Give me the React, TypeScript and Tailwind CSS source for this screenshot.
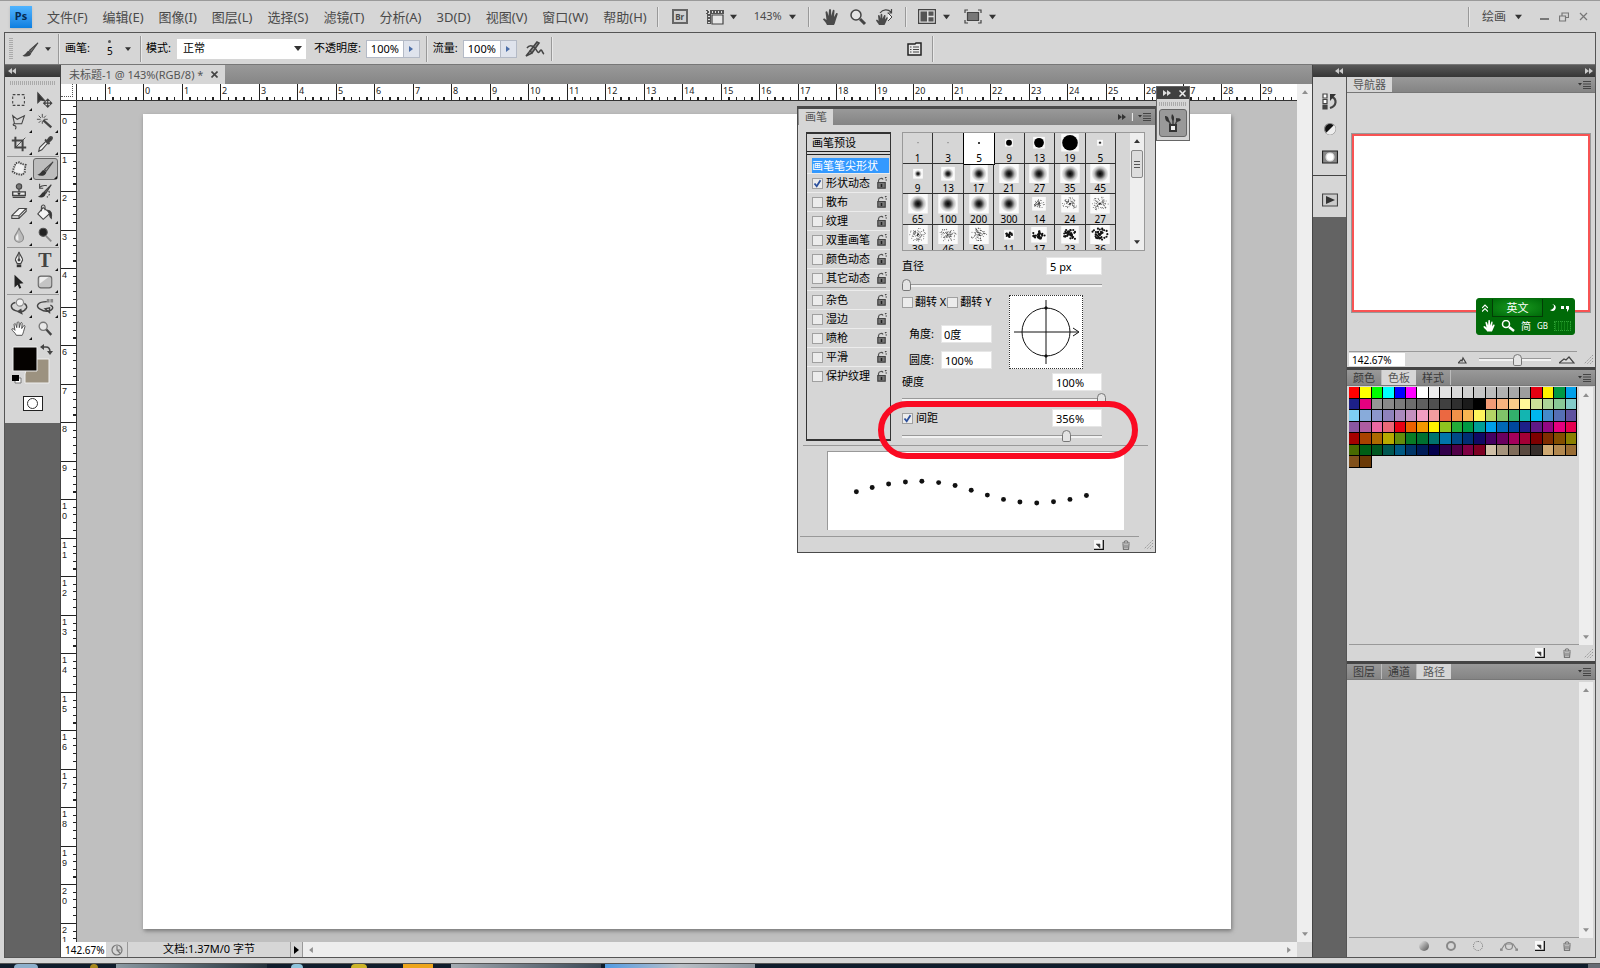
import type { ReactNode } from "react";

const menus = [
  "文件(F)",
  "编辑(E)",
  "图像(I)",
  "图层(L)",
  "选择(S)",
  "滤镜(T)",
  "分析(A)",
  "3D(D)",
  "视图(V)",
  "窗口(W)",
  "帮助(H)",
];

// pixels per ruler unit at the current zoom
const UNIT = 38.5;

interface IconProps {
  children: ReactNode;
  className?: string;
  box?: string;
}

function Icon({ children, className = "size-5", box = "0 0 20 20" }: IconProps) {
  return (
    <svg
      viewBox={box}
      className={className}
      fill="none"
      stroke="#444"
      strokeWidth="1.2"
      aria-hidden="true"
    >
      {children}
    </svg>
  );
}

function Caret({ className = "h-[5px] w-[8px]" }: { className?: string }) {
  return (
    <svg viewBox="0 0 8 5" className={className} aria-hidden="true">
      <path d="M0 0h8L4 5z" fill="#333" />
    </svg>
  );
}

function Sep({ className = "h-6" }: { className?: string }) {
  return (
    <div className={`w-[2px] border-l border-[#999] bg-[#e8e8e8] ${className}`} />
  );
}

function Grip({ className = "w-7" }: { className?: string }) {
  return (
    <div
      className={`h-1 bg-[repeating-linear-gradient(90deg,#aaa_0_1px,transparent_1px_2px)] ${className}`}
    />
  );
}

function DoubleArrow({ left = false }: { left?: boolean }) {
  return (
    <svg
      viewBox="0 0 8 6"
      className={`h-[6px] w-[8px] ${left ? "rotate-180" : ""}`}
      fill="currentColor"
      aria-hidden="true"
    >
      <path d="M0 0l4 3-4 3zM4 0l4 3-4 3z" />
    </svg>
  );
}

function Check({ id, on = false }: { id: string; on?: boolean }) {
  return (
    <span className="grid size-[11px] shrink-0">
      <input
        id={id}
        type="checkbox"
        defaultChecked={on}
        className="peer size-[11px] appearance-none border border-[#a0a0a0] bg-[#ececec] [grid-area:1/1]"
      />
      <svg
        viewBox="0 0 11 11"
        className="pointer-events-none hidden size-[11px] peer-checked:block [grid-area:1/1]"
        fill="none"
        stroke="#2b4f9c"
        strokeWidth="1.8"
      >
        <path d="M2.5 5.5l2.2 2.8L8.5 2.2" />
      </svg>
    </span>
  );
}

function Field({ id, value, className }: { id: string; value: string; className: string }) {
  return (
    <input
      id={id}
      aria-label={id}
      type="text"
      defaultValue={value}
      className={`h-[18px] border border-[#e6e6e6] bg-white text-[11px] leading-4 text-black ${className}`}
    />
  );
}

function Slider({ label, value, className }: { label: string; value: number; className: string }) {
  return (
    <input
      type="range"
      aria-label={label}
      defaultValue={value}
      className={`block h-3 appearance-none bg-[linear-gradient(#999_33%,#f2f2f2_33%)] bg-[length:200px_3px] bg-left bg-no-repeat [&::-webkit-slider-thumb]:h-3 [&::-webkit-slider-thumb]:w-[9px] [&::-webkit-slider-thumb]:appearance-none [&::-webkit-slider-thumb]:rounded-t-[5px] [&::-webkit-slider-thumb]:rounded-b-[2px] [&::-webkit-slider-thumb]:border [&::-webkit-slider-thumb]:border-[#777] [&::-webkit-slider-thumb]:bg-[#e4e4e4] ${className}`}
    />
  );
}

function MenuBar() {
  return (
    <header className="flex h-8 shrink-0 items-center border-t border-[#9a9a9a] pl-[10px] pr-3 text-[13px] text-[#4a4a4a]">
      <div className="flex size-[22px] items-center justify-center bg-linear-to-b from-[#4fb4ff] to-[#0a7fe0] text-[11px] font-bold text-[#062a50] shadow">
        Ps
      </div>
      <nav className="ml-[15px] flex gap-[15px]">
        {menus.map((m) => (
          <button key={m} className="whitespace-nowrap leading-5">
            {m}
          </button>
        ))}
      </nav>
      <Sep className="ml-[10px] h-5" />
      <button className="ml-[13px] flex h-[15px] w-4 items-center justify-center border-2 border-[#666] bg-[#d0d0d0] text-[8px] font-bold leading-none">
        Br
      </button>
      <button className="ml-[18px] flex items-center gap-[6px]" aria-label="查看额外内容">
        <Icon className="h-4 w-[18px]" box="0 0 18 16">
          <path d="M0 3h18M3 1v14" stroke="#555" strokeWidth="4" />
          <path d="M0 3h18M3 1v14" stroke="#ddd" strokeWidth="2" strokeDasharray="1 2" />
          <path d="M6 6h11v9H6z" fill="#e6e6e6" />
        </Icon>
        <Caret className="h-[6px] w-[7px]" />
      </button>
      <button className="ml-[17px] flex items-center gap-[7px] text-[11px]">
        143%
        <Caret className="h-[6px] w-[7px]" />
      </button>
      <Sep className="ml-[12px] h-5" />
      <div className="ml-[11px] flex items-center gap-[7px]">
        <button aria-label="抓手工具">
          <Icon>
            <path
              d="M6 18c-1-3-4-5-4-6 1-1 2-.5 3.5 1L4.5 5c.5-1.2 1.800-1 2 .2L7.500 9 8 3c.3-1.200 1.800-1.200 2 0l.3 6 1.400-5.500c.4-1 1.800-.8 1.800.4L13 10l2-3.500c.7-.9 2-.3 1.600.9L14.500 14c-.5 2-1 3-1.500 4z"
              fill="#4a4a4a"
              stroke="none"
            />
          </Icon>
        </button>
        <button aria-label="缩放工具">
          <Icon>
            <circle cx="8" cy="8" r="5" strokeWidth="1.5" fill="#e3e3e3" />
            <path d="M12 12l5 5" strokeWidth="3" />
          </Icon>
        </button>
        <button aria-label="旋转视图工具">
          <Icon>
            <path
              d="M4 18c-1-2-3-4-3-5 1-.6 1.600 0 2.600 1L3 8.500c.6-1 1.500-.6 1.700.3l.7 2.700.2-4c.5-1 1.600-.8 1.700.2l.1 4L9 8.500c.5-.9 1.600-.4 1.500.5L10 12.500l1.500-2c.7-.6 1.500 0 1.200.8L10.500 16l-1 2z"
              fill="#4a4a4a"
              stroke="none"
            />
            <path d="M13 6l4 4-4 4" fill="#f0f0f0" strokeWidth="1" />
            <path d="M5 6c3-4 8-4 11-1m.5-3v4h-4" />
          </Icon>
        </button>
      </div>
      <Sep className="ml-[10px] h-5" />
      <button className="ml-[11px] flex items-center gap-[7px]" aria-label="排列文档">
        <Icon className="h-[15px] w-[18px]" box="0 0 18 15">
          <path d="M.6.6h16.8v13.8H.6z" fill="#ddd" />
          <path d="M2.5 2.5H9v10H2.5zM10.5 2.5h5v4.2h-5zM10.5 8.3h5v4.2h-5z" fill="#555" stroke="none" />
        </Icon>
        <Caret className="h-[6px] w-[7px]" />
      </button>
      <button className="ml-[14px] flex items-center gap-[7px]" aria-label="屏幕模式">
        <Icon className="h-[15px] w-[18px]" box="0 0 18 15">
          <path d="M1 4V1h3M14 1h3v3M17 11v3h-3M4 14H1v-3" />
          <path d="M3.5 3.5h11v8h-11z" fill="#777" />
        </Icon>
        <Caret className="h-[6px] w-[7px]" />
      </button>
      <Sep className="ml-auto h-5" />
      <button className="ml-3 flex items-center gap-[9px] text-[12px] leading-5">
        绘画
        <Caret className="h-[6px] w-[7px]" />
      </button>
      <div className="ml-[18px] flex items-center gap-[10px]">
        <button aria-label="最小化">
          <Icon className="h-[10px] w-[9px]" box="0 0 9 10">
            <path d="M0 7h9" stroke="#777" strokeWidth="2" />
          </Icon>
        </button>
        <button aria-label="还原">
          <Icon className="h-[10px] w-[10px]" box="0 0 10 10">
            <path d="M3 3.5V1h6.5v4.5H7M.5 4h6v5h-6z" stroke="#777" />
          </Icon>
        </button>
        <button aria-label="关闭">
          <Icon className="size-[9px]" box="0 0 9 9">
            <path d="M1 1l7 7M8 1L1 8" stroke="#777" />
          </Icon>
        </button>
      </div>
    </header>
  );
}

const brushPath = "M19 2L9.5 10.5l2 2L19 2z";
const bristlePath = "M9 11c-3 0-3 4-7.5 5.5 4 2 9.5 1 10-3z";

function PercentBox({ label }: { label: string }) {
  return (
    <>
      <label htmlFor={label} className="whitespace-nowrap">
        {label}:
      </label>
      <div className="ml-[5px] flex h-[18px] border border-[#b4bac6] bg-white">
        <input
          id={label}
          type="text"
          defaultValue="100%"
          className="w-9 bg-white pl-1 text-[11px] leading-4"
        />
        <button
          className="flex w-4 items-center justify-center border-l border-[#b4bac6] bg-[#dfe3ec]"
          aria-label={`${label}滑块`}
        >
          <svg viewBox="0 0 4 6" className="h-[6px] w-1">
            <path d="M0 0l4 3-4 3z" fill="#4b6ea8" />
          </svg>
        </button>
      </div>
    </>
  );
}

function OptionsBar() {
  return (
    <div className="flex h-8 shrink-0 items-center border-t border-[#555] pl-1 text-[11px] text-black">
      <div className="h-[22px] w-1 bg-[repeating-linear-gradient(#aaa_0_1px,transparent_1px_2px)]" />
      <button className="ml-2 flex items-center gap-[6px]" aria-label="工具预设">
        <Icon className="h-4 w-[18px]" box="0 0 20 18">
          <path d={brushPath} fill="#777" />
          <path d={bristlePath} fill="#444" stroke="none" />
        </Icon>
        <Caret className="h-1 w-[6px]" />
      </button>
      <Sep className="ml-[7px] h-[30px]" />
      <span className="ml-[5px]">画笔:</span>
      <button className="ml-[15px] flex items-center" aria-label="画笔预设选取器">
        <span className="flex w-[10px] flex-col items-center gap-[3px] text-[10px] leading-[11px]">
          <span className="size-[3px] rounded-full bg-[#555]" />5
        </span>
        <Caret className="ml-[10px] h-1 w-[6px]" />
      </button>
      <Sep className="ml-[9px] h-[26px]" />
      <label htmlFor="mode" className="ml-[4px]">
        模式:
      </label>
      <div className="ml-[6px] grid w-[129px] items-center">
        <select id="mode" className="h-5 appearance-none bg-white pl-[6px] text-[11px] [grid-area:1/1]">
          <option>正常</option>
        </select>
        <Caret className="pointer-events-none mr-1 h-[5px] w-[8px] justify-self-end [grid-area:1/1]" />
      </div>
      <div className="ml-[8px] flex items-center">
        <PercentBox label="不透明度" />
      </div>
      <Sep className="ml-[6px] h-[26px]" />
      <div className="ml-[5px] flex items-center">
        <PercentBox label="流量" />
      </div>
      <button className="ml-2" aria-label="喷枪">
        <Icon className="h-[18px] w-5" box="0 0 20 18">
          <path d="M12 2L5 11l2 2 7-10z" fill="#999" strokeWidth="1.6" />
          <path d="M5 11l-4 5 6-3M2 8c2-3 5-3 8 0 3 4 3 6 5 3s2 2 4 3" strokeWidth="1.5" />
        </Icon>
      </button>
      <Sep className="ml-[6px] h-6" />
      <button className="ml-[354px]" aria-label="切换画笔面板">
        <Icon className="h-[14px] w-[15px]" box="0 0 15 14">
          <path d="M1 2h7l1-1h5v12H1z" fill="#e8e8e8" stroke="#222" strokeWidth="1.5" />
          <path d="M3 5h1.5M6 5h6M3 7.5h1.5M6 7.5h6M3 10h1.500M6 10h6" strokeWidth="1" />
        </Icon>
      </button>
      <Sep className="ml-[10px] h-[26px]" />
    </div>
  );
}

// icon drawings, in toolbar order; null leaves a divider
const tools: ({ name: string; art: ReactNode } | null)[] = [
  {
    name: "矩形选框",
    art: <path d="M3 4h13v12H3z" strokeDasharray="3 2" />,
  },
  {
    name: "移动",
    art: (
      <>
        <path d="M2 2v11l3-3 5 1z" fill="#333" />
        <path d="M13 9v9M8.5 13.5h9M13 9l-1.5 1.5h3zM13 18l-1.5-1.5h3zM8.5 13.5L10 12v3zM17.5 13.5L16 12v3z" fill="#333" />
      </>
    ),
  },
  {
    name: "多边形套索",
    art: <path d="M3 3l5 4 8-4-3 9H5zm2 9c-2 0-2 2 0 2s2 2 1 4" />,
  },
  {
    name: "魔棒",
    art: (
      <>
        <path d="M7 1v4M7 9v3M1 7h4M9 7h4M3 3l2.5 2.5M11 3L8.5 5.5M3 11l2.5-2.5" strokeWidth="1" />
        <path d="M8 8l9 8" strokeWidth="2.5" />
      </>
    ),
  },
  {
    name: "裁剪",
    art: (
      <>
        <path d="M6 2v12h12M2 6h12v12" strokeWidth="2.2" />
        <path d="M6 14L17 3" strokeWidth="1" />
      </>
    ),
  },
  {
    name: "吸管",
    art: (
      <>
        <path d="M11 7L4 14l-1 4 3.5-1.5L13 9z" fill="#f2f2f2" />
        <path d="M10 5l5 5M12 7l3-4c2-2 4 0 2 2l-4 4z" fill="#333" strokeWidth="2" />
      </>
    ),
  },
  null,
  {
    name: "修复",
    art: (
      <>
        <path d="M7 4l9 2-2 9-9-2z" fill="#f0f0f0" stroke="none" />
        <path d="M6.500 3.500l4-1 3 2 4 1-1 4 0 4-2.500 3-4-.5-4-1-3-2 1-4z" strokeWidth="2" strokeDasharray="1.5 1.2" />
      </>
    ),
  },
  {
    name: "画笔",
    art: (
      <>
        <path d={brushPath} fill="#999" />
        <path d={bristlePath} fill="#333" stroke="none" />
      </>
    ),
  },
  {
    name: "仿制图章",
    art: (
      <>
        <circle cx="10" cy="5" r="3" fill="#777" />
        <path d="M10 8v3M3 11h14v4H3zM3 17h14" fill="#eee" strokeWidth="1.5" />
        <path d="M8 12h4l-2 3z" fill="#333" stroke="none" />
      </>
    ),
  },
  {
    name: "历史记录画笔",
    art: (
      <>
        <path d="M17 3l-8 8 2 1.5z" fill="#666" />
        <path d="M9 11c-3 0-3 4-7 5.5 4 1.5 8 1 9-4z" fill="#333" stroke="none" />
        <path d="M4 6c3-3 6-2 8-2M4 2v5h4" />
        <path d="M14 10c2 2 1 5-2 7" strokeDasharray="2 1.5" />
      </>
    ),
  },
  {
    name: "橡皮擦",
    art: <path d="M2 13l8-8h8l-8 8v3H2zh8M10 16l8-8V5" fill="#f4f4f4" />,
  },
  {
    name: "油漆桶",
    art: (
      <>
        <path d="M8 4l8 6-8 7-6-6z" fill="#f4f4f4" />
        <path d="M6 8V3c1-3 4-2 4 0v4" />
        <path d="M13 7c4 0 5 4 4 9-1-1-2-3-2-5z" fill="#333" />
      </>
    ),
  },
  {
    name: "模糊",
    art: (
      <>
        <path d="M10 2c1 5 5 7 5 11a5 5 0 01-10 0c0-4 4-6 5-11z" fill="#bbb" stroke="#888" />
        <path d="M9 8c-1 2-2.5 3-2.5 5a3 3 0 003 3z" fill="#f0f0f0" stroke="none" />
      </>
    ),
  },
  {
    name: "减淡",
    art: (
      <>
        <circle cx="8" cy="7" r="4.5" fill="#222" stroke="#555" />
        <path d="M11 11l6 6" strokeWidth="2" stroke="#888" />
      </>
    ),
  },
  null,
  {
    name: "钢笔",
    art: (
      <>
        <path d="M10 1c1 4 4 6 4 9l-2 4H8l-2-4c0-3 3-5 4-9z" fill="#eee" />
        <path d="M10 3v7" />
        <circle cx="10" cy="10" r="1" fill="#333" />
        <path d="M7.5 15h5v3h-5z" fill="#333" stroke="none" />
      </>
    ),
  },
  {
    name: "文字",
    art: null,
  },
  {
    name: "路径选择",
    art: <path d="M5 2v14l3.5-3 2 4.5 2-1-2-4.5 4.5-.5z" fill="#222" stroke="none" />,
  },
  {
    name: "圆角矩形",
    art: (
      <>
        <rect x="2.5" y="3.5" width="15" height="13" rx="3" fill="#c4c4c4" stroke="#666" />
        <path d="M4 12V6c0-1 0-1.5 1-1.5h9z" fill="#eee" stroke="none" />
      </>
    ),
  },
  null,
  {
    name: "3D旋转",
    art: (
      <>
        <circle cx="11" cy="5" r="4" fill="#f2f2f2" stroke="#888" />
        <path d="M6 5C-1 7 1 12 6 14c5 2 9 1 11-1M9 15l4 2-1-4zM16 6c4 3 3 6 0 7" strokeWidth="1.6" />
      </>
    ),
  },
  {
    name: "3D环绕",
    art: (
      <>
        <path d="M12 4C2 4-1 9 4 12s9 4 12 1M10 12l5 4v-5zM16 8c4 2 3 4 0 6" strokeWidth="1.6" />
        <path d="M12 1h3v4h-3zM16 1h3v4h-3z" fill="#888" stroke="none" />
      </>
    ),
  },
  {
    name: "抓手",
    art: (
      <path
        d="M7 17c-1-3-5-5-5-7 1-1 2-.5 3.5 1.5L4.500 5c.4-1.300 1.800-1.200 2 .1L7.500 8.500 8 3c.3-1.300 1.800-1.300 2 0l.3 5.500 1.400-5c.4-1 1.800-.8 1.800.4L13 9.500l2-3c.7-.9 2-.3 1.600.9L15 13c-.5 2-1 3-1.500 4z"
        fill="#fff"
        strokeWidth="1"
      />
    ),
  },
  {
    name: "缩放",
    art: (
      <>
        <circle cx="8" cy="7" r="4.5" fill="#e8e8e8" stroke="#777" strokeWidth="1.5" />
        <path d="M11.5 10.5l5.5 6" strokeWidth="2.6" />
      </>
    ),
  },
];

function Toolbox() {
  return (
    <aside className="flex w-14 shrink-0 flex-col border-r border-[#444] bg-[#636363]">
      <div className="flex h-3 items-center bg-linear-to-b from-[#595959] to-[#363636] pl-[3px] text-[#ccc]">
        <DoubleArrow left />
      </div>
      <div className="flex flex-col items-center bg-[#d6d6d6] pb-3">
        <Grip className="mt-1 mb-1 w-[46px]" />
        <div className="grid w-[52px] grid-cols-2">
          {tools.map((t, i) =>
            t === null ? (
              <hr key={i} className="col-span-2 my-px border-t border-[#999]" />
            ) : (
              <button
                key={t.name}
                aria-label={t.name}
                className={
                  t.name === "画笔"
                    ? "grid h-[22px] w-[25px] items-center justify-items-center rounded-[3px] border border-[#666] bg-[#bdbdbd]"
                    : "grid h-[22px] w-[25px] items-center justify-items-center"
                }
              >
                {t.art ? (
                  <Icon className="size-[18px] [grid-area:1/1]">{t.art}</Icon>
                ) : (
                  <span className="font-['Liberation_Serif',serif] text-[20px] font-bold leading-5 text-[#444] [grid-area:1/1]">
                    T
                  </span>
                )}
                {t.name !== "移动" && t.name !== "缩放" && (
                  <svg
                    viewBox="0 0 4 4"
                    className="size-[3px] self-end justify-self-end [grid-area:1/1]"
                  >
                    <path d="M4 0v4H0z" fill="#111" />
                  </svg>
                )}
              </button>
            )
          )}
        </div>
        <svg viewBox="0 0 44 40" className="mt-1 h-10 w-11" aria-label="前景色与背景色">
          <path d="M18 15h20v24H14V30z" fill="#9c9280" stroke="#eee" />
          <path d="M2 3h24v24H2z" fill="#050200" stroke="#eee" />
          <path d="M32 3h3c3 0 4 2 4 5" fill="none" stroke="#444" strokeWidth="1.5" />
          <path d="M33 0v6l-4-3zM36 7h6l-3 4z" fill="#444" />
          <path d="M4 34h6v5H4z" fill="#fff" stroke="#777" />
          <path d="M1 31h7v6H1z" fill="#000" />
        </svg>
        <button
          aria-label="以快速蒙版模式编辑"
          className="mt-3 flex h-[15px] w-5 items-center justify-center border border-[#222] bg-white"
        >
          <span className="size-[11px] rounded-full border border-[#333]" />
        </button>
      </div>
    </aside>
  );
}

function HorizontalRuler() {
  const units = Array.from({ length: 31 }, (_, i) => i - 1);
  return (
    <svg className="h-[17px] min-w-0 flex-1 bg-white" aria-label="水平标尺">
      {units.map((n) => {
        const x = 66 + Math.round(n * UNIT);
        return (
          <g key={n} fill="#222">
            <rect x={x} y="0" width="1" height="16" />
            {[-4, -3, -2, -1, 1, 2, 3, 4].map((k) => (
              <rect key={k} x={x + Math.round(k * 7.7)} y="13" width="1" height="3" />
            ))}
            <text x={x + 2} y="10" fontSize="9">
              {Math.abs(n)}
            </text>
          </g>
        );
      })}
      <rect y="16" width="100%" height="1" fill="#333" />
    </svg>
  );
}

function VerticalRuler() {
  const units = Array.from({ length: 22 }, (_, i) => i);
  return (
    <svg className="h-full w-4 shrink-0 bg-white" aria-label="垂直标尺">
      {units.map((n) => {
        const y = 13 + Math.round(n * UNIT);
        return (
          <g key={n} fill="#222">
            <rect x="0" y={y} width="15" height="1" />
            {[-1, 1, 2, 3, 4].map((k) => (
              <rect key={k} x="12" y={y + Math.round(k * 7.7)} width="3" height="1" />
            ))}
            {String(n)
              .split("")
              .map((d, i) => (
                <text
                  key={i}
                  x="1"
                  y={y + 10 + i * 10}
                  fontSize="9"
                  className="font-['Liberation_Sans',sans-serif]"
                >
                  {d}
                </text>
              ))}
          </g>
        );
      })}
      <rect x="15" width="1" height="100%" fill="#333" />
    </svg>
  );
}

function ScrollRail({ className }: { className: string }) {
  return (
    <div className={`flex shrink-0 flex-col items-center justify-between bg-[#eee] py-[6px] ${className}`}>
      <button aria-label="向上滚动" className="rotate-180 opacity-50">
        <Caret className="h-1 w-[6px]" />
      </button>
      <button aria-label="向下滚动" className="opacity-50">
        <Caret className="h-1 w-[6px]" />
      </button>
    </div>
  );
}

function Document() {
  return (
    <main className="flex min-w-0 flex-1 flex-col">
      <div className="flex h-[19px] shrink-0 bg-linear-to-b from-[#999] to-[#868686]">
        <div className="flex items-center gap-2 bg-[#d6d6d6] pl-2 pr-[7px] text-[11px] leading-[18px] text-[#555]">
          未标题-1 @ 143%(RGB/8) *
          <button aria-label="关闭文档">
            <Icon className="size-[7px]" box="0 0 7 7">
              <path d="M.5.5l6 6M6.5.5l-6 6" strokeWidth="1.6" />
            </Icon>
          </button>
        </div>
      </div>
      <div className="flex min-h-0 flex-1">
        <div className="flex min-w-0 flex-1 flex-col">
          <div className="flex h-[17px] shrink-0">
            <div className="flex h-[17px] w-4 shrink-0 items-stretch border-r border-b border-[#333] bg-white pb-[3px] pr-[3px]">
              <div className="w-full border-r border-b border-dotted border-[#555]" />
            </div>
            <HorizontalRuler />
          </div>
          <div className="flex min-h-0 flex-1 bg-[#bfbfbf]">
            <VerticalRuler />
            <div className="min-w-0 flex-1 px-[66px] py-[13px]">
              <div className="h-full bg-white shadow-[1px_2px_4px_#777]" />
            </div>
          </div>
        </div>
        <ScrollRail className="w-[15px]" />
      </div>
      <footer className="flex h-[15px] shrink-0 items-center bg-[#d6d6d6] text-[11px] leading-[14px] text-black">
        <input
          aria-label="显示比例"
          defaultValue="142.67%"
          className="h-[15px] w-[45px] bg-white pl-1 text-[10px]"
        />
        <Icon className="ml-[5px] size-3" box="0 0 12 12">
          <circle cx="6" cy="6" r="5" stroke="#777" />
          <path d="M6 2v4h3.5M6 6l3 3" stroke="#777" />
        </Icon>
        <div className="ml-1 h-[15px] w-[163px] border-l border-[#999] text-center">
          文档:1.37M/0 字节
        </div>
        <button aria-label="状态栏菜单" className="flex h-[15px] w-[13px] items-center justify-center border-x border-[#999]">
          <svg viewBox="0 0 5 8" className="h-2 w-[5px]">
            <path d="M0 0l5 4-5 4z" fill="#000" />
          </svg>
        </button>
        <div className="flex h-[15px] flex-1 items-center justify-between bg-[#eee] px-[5px]">
          <Caret className="h-1 w-[6px] rotate-90 opacity-50" />
          <Caret className="h-1 w-[6px] -rotate-90 opacity-50" />
        </div>
        <div className="w-[15px]" />
      </footer>
    </main>
  );
}

function PanelMenu() {
  return (
    <button aria-label="面板菜单" className="flex items-center">
      <Icon className="h-2 w-[13px]" box="0 0 13 8">
        <path d="M0 2h4L2 4.5z" fill="#333" stroke="none" />
        <path d="M5 .5h8M5 3h8M5 5.5h8M5 7.5h8" strokeWidth="1" />
      </Icon>
    </button>
  );
}

function Tabs({ names, active }: { names: string[]; active: string }) {
  return (
    <div className="flex h-4 shrink-0 items-stretch border-b border-[#777] bg-linear-to-b from-[#999] to-[#848484] pr-1 text-[11px] leading-[15px]">
      {names.map((n) => (
        <button
          key={n}
          className={
            n === active
              ? "bg-[#d6d6d6] px-[6px] text-[#555]"
              : "border-r border-[#bbb] px-[6px] text-[#3a3a3a]"
          }
        >
          {n}
        </button>
      ))}
      <div className="ml-auto flex items-center">
        <PanelMenu />
      </div>
    </div>
  );
}

function NewIcon() {
  return (
    <button aria-label="新建">
      <Icon className="h-[10px] w-[10px]" box="0 0 10 10">
        <path d="M0 0h9v9H0z" fill="#f8f8f8" stroke="none" />
        <path d="M9.300 0v9.300H0" stroke="#111" strokeWidth="1.300" />
        <path d="M2 4h4v4z" fill="#333" stroke="#555" strokeWidth=".6" />
      </Icon>
    </button>
  );
}

function TrashIcon() {
  return (
    <button aria-label="删除">
      <Icon className="h-[10px] w-[10px]" box="0 0 10 10">
        <path d="M1 3h8M3 3c0-3 4-3 4 0M2 4l.5 5.5h5L8 4M4 4.5v4M6 4.5v4" stroke="#777" />
      </Icon>
    </button>
  );
}

function Resize() {
  return (
    <Icon className="size-[9px]" box="0 0 9 9">
      <path d="M9 0L0 9M9 3L3 9M9 6L6 9" stroke="#999" strokeWidth="1" strokeDasharray="1.5 1" />
    </Icon>
  );
}

const swatchRows = [
  "ff0000 ffff00 00ff00 00ffff 0000ff ff00ff ffffff ececec e2e2e2 d8d8d8 cfcfcf c5c5c5 bcbcbc b2b2b2 a8a8a8 9d9d9d e60012 fff100 009944 00a0e9",
  "1d2088 e4007f 959595 898989 7b7b7b 6d6d6d 5f5f5f 505050 404040 2f2f2f 1b1b1b 000000 f29b76 f6b37f facd89 fff799 cce198 acd598 89c997 84ccc9",
  "7ecef4 88abda 8c97cb 8f82bc aa89bd c490bf f19ec2 f29c9f eb6841 f19149 f8b551 fff45c b3d465 80c269 32b16c 13b5b1 00b7ee 448aca 556fb5 5f52a0",
  "8957a1 ae5da1 ea68a2 eb6877 e60012 eb6100 f39800 fff100 8fc31f 22ac38 009944 009e96 00a0e9 0068b7 00479d 1d2088 601986 920783 e4007f e5004f",
  "a40000 a84200 ac6a00 b7aa00 638c0b 097c25 007130 00736d 0075a9 004986 002e73 100964 440062 6a005f a4005b a40035 7d0000 7f2d00 834e00 8a8000",
  "486a00 005e15 00561f 005752 005982 003567 001c58 03004c 31004a 500047 7e0043 7d0022 cfbfa6 a5937c 7f6c5a 59493f 362e2b cfa972 b28850 996c33",
  "81511c 6a3906",
];

function Panels() {
  return (
    <aside className="flex w-[283px] shrink-0 flex-col border-l border-[#444]">
      <div className="flex h-3 shrink-0 items-center bg-linear-to-b from-[#595959] to-[#363636] pr-[2px] text-[#ccc]">
        <div className="flex w-[30px] justify-end">
          <DoubleArrow left />
        </div>
        <div className="ml-auto">
          <DoubleArrow />
        </div>
      </div>
      <div className="flex min-h-0 flex-1">
        <div className="flex w-[34px] shrink-0 flex-col border-r border-[#555] bg-[#636363]">
          <div className="flex flex-col items-center bg-[#d6d6d6] pb-[7px]">
            <Grip className="mt-[3px]" />
            <button aria-label="历史记录" className="mt-2">
              <Icon className="size-[18px]" box="0 0 18 18">
                <path d="M2 2h4v4H2zM2 7.5h4v4H2z" fill="#fff" />
                <path d="M2 13h4v4H2z" fill="#444" />
                <path d="M9 16c7-2 7-9 2-11" strokeWidth="2.2" />
                <path d="M9 2h6l-6 7z" fill="#333" stroke="none" />
              </Icon>
            </button>
            <button aria-label="调整" className="mt-3">
              <Icon className="size-[14px]" box="0 0 14 14">
                <circle cx="7" cy="7" r="5.5" fill="#111" stroke="#888" />
                <path d="M11 3a5.5 5.5 0 01-8 8z" fill="#eee" stroke="none" />
              </Icon>
            </button>
            <button aria-label="蒙版" className="mt-[14px]">
              <Icon className="h-[14px] w-4" box="0 0 16 14">
                <path d="M.5 1h15v12H.5z" fill="#888" stroke="#222" />
                <circle cx="8" cy="7" r="4" fill="#fff" stroke="#ddd" />
              </Icon>
            </button>
            <div className="h-1" />
          </div>
          <div className="flex flex-col items-center border-t border-[#444] bg-[#d6d6d6] pb-[10px]">
            <Grip className="mt-1" />
            <button aria-label="动作" className="mt-[9px]">
              <Icon className="h-[14px] w-4" box="0 0 16 14">
                <path d="M.5 1h15v12H.5z" fill="#ccc" stroke="#444" />
                <path d="M4 3l9 4-9 4z" fill="#333" stroke="none" />
              </Icon>
            </button>
          </div>
        </div>
        <div className="flex min-w-0 flex-1 flex-col bg-[#d6d6d6]">
          <section className="flex h-[290px] shrink-0 flex-col">
            <Tabs names={["导航器"]} active="导航器" />
            <div className="mx-[5px] mt-[41px] h-[178px] border-2 border-[#f85353] bg-white outline-1 outline-[#999]" />
            <div className="ml-[2px] mr-[18px] mt-[39px] border-t border-[#999]" />
            <div className="flex items-center px-[2px] pt-px">
              <input
                aria-label="导航器缩放"
                defaultValue="142.67%"
                className="h-[13px] w-14 bg-white pl-[3px] text-[10px] leading-3 text-black"
              />
              <Icon className="ml-[53px] h-2 w-[9px]" box="0 0 9 8">
                <path d="M0 7l3-3 1 1 1-3 3 5z" fill="#ddd" />
              </Icon>
              <Slider label="缩放滑块" value={54} className="ml-3 w-[72px]" />
              <Icon className="ml-2 h-2 w-4" box="0 0 16 8">
                <path d="M0 7l5-4 2 1 3-3 5 6z" fill="#ddd" />
              </Icon>
              <div className="ml-auto">
                <Resize />
              </div>
            </div>
          </section>
          <section className="flex h-[294px] shrink-0 flex-col border-t-[3px] border-[#444]">
            <Tabs names={["颜色", "色板", "样式"]} active="色板" />
            <div className="flex min-h-0 flex-1 pl-[2px] pt-px">
              <div className="flex min-w-0 flex-1 flex-col border-b border-[#999]">
                {swatchRows.map((row, r) => (
                  <div key={r} className="grid h-[11px] w-[228px] grid-cols-20 odd:h-3">
                    {row.split(" ").map((c, i) => (
                      <button
                        key={i}
                        aria-label={`#${c}`}
                        className="border-r border-b border-black"
                        style={{ backgroundColor: `#${c}` }}
                      />
                    ))}
                  </div>
                ))}
              </div>
              <ScrollRail className="mr-[2px] w-[14px]" />
            </div>
            <div className="flex h-4 shrink-0 items-center justify-end pr-[2px]">
              <NewIcon />
              <div className="ml-[17px] mr-[12px] flex">
                <TrashIcon />
              </div>
              <Resize />
            </div>
          </section>
          <section className="flex min-h-0 flex-1 flex-col border-t-[3px] border-[#444]">
            <Tabs names={["图层", "通道", "路径"]} active="路径" />
            <div className="flex min-h-0 flex-1 pl-[2px] pt-[2px]">
              <div className="flex-1 border-b border-[#999]" />
              <ScrollRail className="mr-[2px] w-[14px]" />
            </div>
            <div className="flex h-[19px] shrink-0 items-center justify-end gap-[17px] pb-1 pr-[23px]">
              <button aria-label="用前景色填充路径" className="size-[10px] rounded-full bg-linear-to-br from-[#eee] to-[#555]" />
              <button aria-label="用画笔描边路径" className="size-[10px] rounded-full border-2 border-[#888]" />
              <button aria-label="将路径作为选区载入" className="size-[10px] rounded-full border border-dotted border-[#777]" />
              <button aria-label="从选区生成工作路径">
                <Icon className="h-[10px] w-[18px]" box="0 0 18 10">
                  <circle cx="9" cy="5" r="3.5" stroke="#888" />
                  <path d="M1 9l4-6h8l4 6M0 8h2v2H0zM16 8h2v2h-2z" stroke="#888" />
                </Icon>
              </button>
              <NewIcon />
              <TrashIcon />
            </div>
          </section>
        </div>
      </div>
    </aside>
  );
}

type Tip = { size: number; kind: "hard" | "soft" | "spatter" | "chalk"; r: number };

const tips: Tip[] = [
  { size: 1, kind: "hard", r: 0.5 },
  { size: 3, kind: "hard", r: 0.5 },
  { size: 5, kind: "hard", r: 1 },
  { size: 9, kind: "hard", r: 3 },
  { size: 13, kind: "hard", r: 5 },
  { size: 19, kind: "hard", r: 8 },
  { size: 5, kind: "soft", r: 2 },
  { size: 9, kind: "soft", r: 4 },
  { size: 13, kind: "soft", r: 6 },
  { size: 17, kind: "soft", r: 8 },
  { size: 21, kind: "soft", r: 9 },
  { size: 27, kind: "soft", r: 9 },
  { size: 35, kind: "soft", r: 9 },
  { size: 45, kind: "soft", r: 9 },
  { size: 65, kind: "soft", r: 9 },
  { size: 100, kind: "soft", r: 9 },
  { size: 200, kind: "soft", r: 9 },
  { size: 300, kind: "soft", r: 9 },
  { size: 14, kind: "spatter", r: 6 },
  { size: 24, kind: "spatter", r: 8 },
  { size: 27, kind: "spatter", r: 9 },
  { size: 39, kind: "spatter", r: 9 },
  { size: 46, kind: "spatter", r: 9 },
  { size: 59, kind: "spatter", r: 9 },
  { size: 11, kind: "chalk", r: 4 },
  { size: 17, kind: "chalk", r: 7 },
  { size: 23, kind: "chalk", r: 8 },
  { size: 36, kind: "chalk", r: 9 },
];

function noise(n: number) {
  const v = Math.sin(n * 127.1) * 43758.5;
  return v - Math.floor(v);
}

function TipArt({ size, kind, r }: Tip) {
  const count = kind === "spatter" ? r * 9 : r * 4;
  const specks = Array.from({ length: count }, (_, i) => {
    const a = noise(i + size * 7) * Math.PI * 2;
    const d = r * noise(i * 3 + size) * 0.95;
    return { x: 10 + d * Math.cos(a), y: 10 + d * Math.sin(a) * 0.85 };
  });
  return (
    <svg viewBox="0 0 20 20" className="size-5" aria-hidden="true">
      <defs>
        <radialGradient id="soft-tip">
          <stop offset="0" stopColor="#000" />
          <stop offset="0.3" stopColor="#333" />
          <stop offset="0.65" stopColor="#bbb" />
          <stop offset="1" stopColor="#fff" />
        </radialGradient>
      </defs>
      {r > 1 && <rect x={9 - r} y={9 - r} width={2 * r + 2} height={2 * r + 2} fill="#fafafa" />}
      {kind === "hard" && <circle cx="10" cy="10" r={r} fill="#000" />}
      {kind === "soft" && <circle cx="10" cy="10" r={r} fill="url(#soft-tip)" />}
      {(kind === "spatter" || kind === "chalk") &&
        specks.map((s, i) => (
          <circle
            key={i}
            cx={s.x}
            cy={s.y}
            r={kind === "chalk" ? 1.1 : 0.5}
            fill={kind === "chalk" ? "#111" : "#333"}
          />
        ))}
    </svg>
  );
}

function TipOption({ name, on = false }: { name: string; on?: boolean }) {
  return (
    <div className="flex h-[19px] items-center border-t border-[#ececec] pl-[5px] pr-[3px]">
      <Check id={name} on={on} />
      <label htmlFor={name} className="ml-[3px] flex-1 whitespace-nowrap">
        {name}
      </label>
      <Icon className="h-3 w-[10px]" box="0 0 10 12">
        <path d="M1.5 5V3.500C2 1 5.500 1 6 2.500" stroke="#555" />
        <path d="M.8 5.500h7.400v5.700H.8z" fill="#777" stroke="#444" />
        <path d="M4.500 7v3" stroke="#222" strokeWidth="1.500" />
        <path d="M8 1l1.500-1M8.500 3H10" />
      </Icon>
    </div>
  );
}

const strokeDots = [
  [82, 121], [130, 108], [180, 97], [231, 91], [281, 89],
  [332, 93], [382, 102], [431, 116], [480, 131], [529, 144],
  [579, 152], [630, 155], [681, 151], [731, 144], [781, 132],
];

function BrushPanel() {
  return (
    <section className="absolute left-[797px] top-[106px] flex w-[359px] flex-col border border-t-[3px] border-[#4a4a4a] bg-[#d6d6d6] text-[11px] leading-4 text-black">
      <div className="flex h-4 items-stretch bg-linear-to-b from-[#999] to-[#848484] pr-1">
        <button className="ml-px bg-[#d6d6d6] px-[6px] text-[#555]">画笔</button>
        <div className="ml-auto flex items-center gap-[5px] text-[#333]">
          <DoubleArrow />
          <Sep className="h-2" />
          <PanelMenu />
        </div>
      </div>
      <div className="flex pl-2 pt-[7px]">
        <div className="flex h-[309px] w-[85px] flex-col border border-t-2 border-b-2 border-[#333]">
          <button className="h-[18px] border-b border-[#222] pl-[5px] text-left">画笔预设</button>
          <div className="mt-[2px] border-t border-[#222]" />
          <button className="ml-[5px] mr-px mt-[3px] h-[15px] whitespace-nowrap bg-[#3399ff] text-left leading-[15px] text-white">
            画笔笔尖形状
          </button>
          <TipOption name="形状动态" on />
          <TipOption name="散布" />
          <TipOption name="纹理" />
          <TipOption name="双重画笔" />
          <TipOption name="颜色动态" />
          <TipOption name="其它动态" />
          <hr className="mx-1 mb-[2px] border-t border-[#999]" />
          <TipOption name="杂色" />
          <TipOption name="湿边" />
          <TipOption name="喷枪" />
          <TipOption name="平滑" />
          <TipOption name="保护纹理" />
        </div>
        <div className="ml-[11px] w-[243px]">
          <div className="flex h-[119px] overflow-hidden border border-[#999]">
            <div className="grid h-[122px] w-[213px] grid-cols-7 grid-rows-4">
              {tips.map((t, i) => (
                <button
                  key={i}
                  className={
                    i === 2
                      ? "flex flex-col items-center bg-white text-[10px] leading-[10px] outline-1 outline-black"
                      : "flex flex-col items-center border-r border-b border-[#333] text-[10px] leading-[10px]"
                  }
                >
                  <TipArt {...t} />
                  {t.size}
                </button>
              ))}
            </div>
            <div className="ml-auto flex w-[14px] flex-col items-center bg-[#eee] py-[6px]">
              <Caret className="h-1 w-[6px] rotate-180" />
              <div className="mt-[7px] flex h-7 w-3 flex-col items-center justify-center gap-[2px] rounded-[2px] border border-[#888] bg-[#ddd]">
                <span className="h-px w-[6px] bg-[#555]" />
                <span className="h-px w-[6px] bg-[#555]" />
                <span className="h-px w-[6px] bg-[#555]" />
              </div>
              <Caret className="mt-auto h-1 w-[6px]" />
            </div>
          </div>
          <div className="mt-[6px] flex w-[200px] items-center justify-between">
            <label htmlFor="直径">直径</label>
            <Field id="直径" value="5 px" className="w-14 pl-[3px]" />
          </div>
          <Slider label="直径滑块" value={0} className="mt-1 w-[204px]" />
          <div className="mt-1 flex">
            <div className="w-[107px]">
              <div className="flex h-[14px] items-center whitespace-nowrap">
                <Check id="flip-x" />
                <label htmlFor="flip-x" className="ml-[2px] mr-px">
                  翻转 X
                </label>
                <Check id="flip-y" />
                <label htmlFor="flip-y" className="ml-[2px]">
                  翻转 Y
                </label>
              </div>
              <div className="mt-4 flex items-center pl-[7px]">
                <label htmlFor="角度" className="w-8">
                  角度:
                </label>
                <Field id="角度" value="0度" className="w-[51px] pl-[2px]" />
              </div>
              <div className="mt-2 flex items-center pl-[7px]">
                <label htmlFor="圆度" className="w-8">
                  圆度:
                </label>
                <Field id="圆度" value="100%" className="w-[51px] pl-[3px]" />
              </div>
            </div>
            <div className="size-[74px] border border-dotted border-[#333] bg-white">
              <svg viewBox="0 0 72 72" className="size-[72px]" fill="none" stroke="#111">
                <circle cx="36" cy="36" r="24" />
                <path d="M4 36h64M36 4v64M63 32l6 4-6 4" />
                <path d="M35 11h2v2h-2zM35 59h2v2h-2z" fill="#111" />
              </svg>
            </div>
          </div>
          <div className="mt-1 flex w-[200px] items-center justify-between">
            <label htmlFor="硬度">硬度</label>
            <Field id="硬度" value="100%" className="w-[50px] pl-[3px]" />
          </div>
          <Slider label="硬度滑块" value={100} className="mt-[2px] w-[204px]" />
          <div className="mt-1 flex w-[200px] items-center">
            <Check id="间距开关" on />
            <label htmlFor="间距开关" className="ml-[3px] mr-auto">
              间距
            </label>
            <Field id="间距" value="356%" className="w-[50px] pl-[3px]" />
          </div>
          <Slider label="间距滑块" value={82} className="mt-[3px] w-[204px]" />
        </div>
      </div>
      <div className="ml-[5px] mr-[7px] mt-[3px] border-t border-[#999]" />
      <svg
        viewBox="0 0 891 237"
        className="ml-[29px] mt-[5px] h-[79px] w-[297px] border-t border-l border-[#999] bg-white"
        aria-label="画笔预览"
      >
        {strokeDots.map(([x, y]) => (
          <circle key={x} cx={x} cy={y} r="7.5" fill="#111" />
        ))}
      </svg>
      <div className="ml-[2px] mr-4 mt-[6px] border-t border-[#999]" />
      <div className="flex h-[15px] items-center justify-end pr-[2px]">
        <NewIcon />
        <div className="ml-[17px] mr-[13px] flex">
          <TrashIcon />
        </div>
        <Resize />
      </div>
      <div className="pointer-events-none absolute left-[80px] top-[292px] h-[58px] w-[260px] rounded-full border-[6px] border-[#fa0a22]" />
    </section>
  );
}

function BrushDock() {
  return (
    <section className="absolute left-[1156px] top-[86px] flex w-[34px] flex-col items-center border border-[#666] bg-[#d6d6d6]">
      <div className="flex h-3 w-full items-center justify-end gap-2 bg-[#404040] pr-[3px] text-[#ddd]">
        <DoubleArrow />
        <button aria-label="关闭面板">
          <Icon className="size-[7px]" box="0 0 7 7">
            <path d="M.5.5l6 6M6.5.5l-6 6" stroke="#eee" strokeWidth="1.5" />
          </Icon>
        </button>
      </div>
      <Grip className="mt-[3px] w-7" />
      <button
        aria-label="画笔面板"
        className="my-[3px] flex size-7 items-center justify-center rounded-[3px] border border-[#666] bg-[#999]"
      >
        <Icon>
          <path d="M8 12L5 7M10 11V6M12 12l3-6" strokeWidth="1.6" />
          <path d="M2 3c3 0 4 2 4 6-3 0-4-3-4-6zM9 1c2 2 3 4 1 7-2-2-2-4-1-7zM13 5c2 1 3-1 5 2-2 2-4 2-5 1z" fill="#333" stroke="none" />
          <path d="M7 12h6v6H7z" fill="#eee" strokeWidth="2" stroke="#333" />
        </Icon>
      </button>
    </section>
  );
}

function InputMethodBar() {
  return (
    <div className="absolute left-[1476px] top-[298px] flex w-[99px] flex-col rounded-[3px] border border-[#046b0a] bg-[#006a08] text-[12px] leading-4 text-white">
      <div className="flex h-[18px] items-stretch">
        <button aria-label="展开" className="flex w-[15px] items-center justify-center">
          <Icon className="h-2 w-[6px]" box="0 0 6 8">
            <path d="M0 4l3-3 3 3M0 7.5l3-3 3 3" stroke="#fff" />
          </Icon>
        </button>
        <button className="w-[51px] border-x border-b border-[#033d06] bg-radial from-[#1a9c20] to-[#006a08] text-[11px]">
          英文
        </button>
        <button aria-label="全角半角" className="flex flex-1 items-center justify-center">
          <Icon className="h-2 w-5" box="0 0 20 8">
            <path d="M3 0c3 1 3 5-2 6 5 4 9-5 2-6z" fill="#fff" stroke="none" />
            <path d="M12 2h3v3h-3zM17 2h3v3l-2 3v-3h-1z" fill="#fff" stroke="none" />
          </Icon>
        </button>
      </div>
      <div className="flex h-[17px] items-center gap-[6px] pl-[6px]">
        <Icon className="size-3" box="0 0 20 20">
          <path
            d="M7 19c-1-3-7-6-6-8s3 0 5 2L4 4c1-2 2-1 3 1l1.5 4L9 1c1-2 2-1 2.5 0l.5 8 2-6c1-1 2-1 2 1l-1 7 2-3c2-1 3 0 2 2l-4 9z"
            fill="#fff"
            stroke="none"
          />
        </Icon>
        <Icon className="h-3 w-[14px]" box="0 0 14 12">
          <circle cx="5" cy="4" r="3.5" stroke="#fff" strokeWidth="1.5" />
          <path d="M8 7l5 4" stroke="#fff" strokeWidth="2.5" />
        </Icon>
        <span className="text-[10px]">简</span>
        <span className="text-[8px]">GB</span>
        <div className="h-[10px] w-[17px] border border-dotted border-[#2ea034] bg-[repeating-linear-gradient(90deg,#128518_0_1px,transparent_1px_3px)]" />
      </div>
    </div>
  );
}

function Taskbar() {
  return (
    <div className="flex h-[5px] shrink-0 items-stretch overflow-hidden border-t border-[#555] bg-[#101d2c]">
      <div className="ml-[14px] w-6 rounded-t-full bg-[#8fb0cc]" />
      <div className="ml-[52px] w-2 rounded-t-full bg-[#a98a1e]" />
      <div className="ml-[18px] w-[151px] bg-linear-to-r from-[#8c9aa3] to-[#26333d]" />
      <div className="ml-6 w-3 rounded-t-full bg-[#8fc4dc]" />
      <div className="ml-12 w-4 rounded-t-full bg-[#cdb52a]" />
      <div className="ml-9 w-[30px] bg-[#eda51c]" />
      <div className="ml-[18px] w-[150px] bg-linear-to-r from-[#a4abb2] to-[#3b4855]" />
      <div className="ml-1 w-[150px] bg-linear-to-r from-[#4f9ae2] via-[#b9bfc6] to-[#8d969f]" />
      <div className="ml-auto w-3 bg-[#666b73]" />
    </div>
  );
}

export default function App() {
  return (
    <div className="relative flex h-screen flex-col overflow-hidden bg-[#d6d6d6] font-['Noto_Sans','Noto_Sans_CJK_SC',sans-serif]">
      <MenuBar />
      <div className="mx-1 flex min-h-0 flex-1 flex-col border-x border-b border-[#555]">
        <OptionsBar />
        <div className="flex min-h-0 flex-1 border-t border-[#777]">
          <Toolbox />
          <Document />
          <Panels />
        </div>
      </div>
      <div className="h-[5px] shrink-0" />
      <Taskbar />
      <BrushPanel />
      <BrushDock />
      <InputMethodBar />
    </div>
  );
}
